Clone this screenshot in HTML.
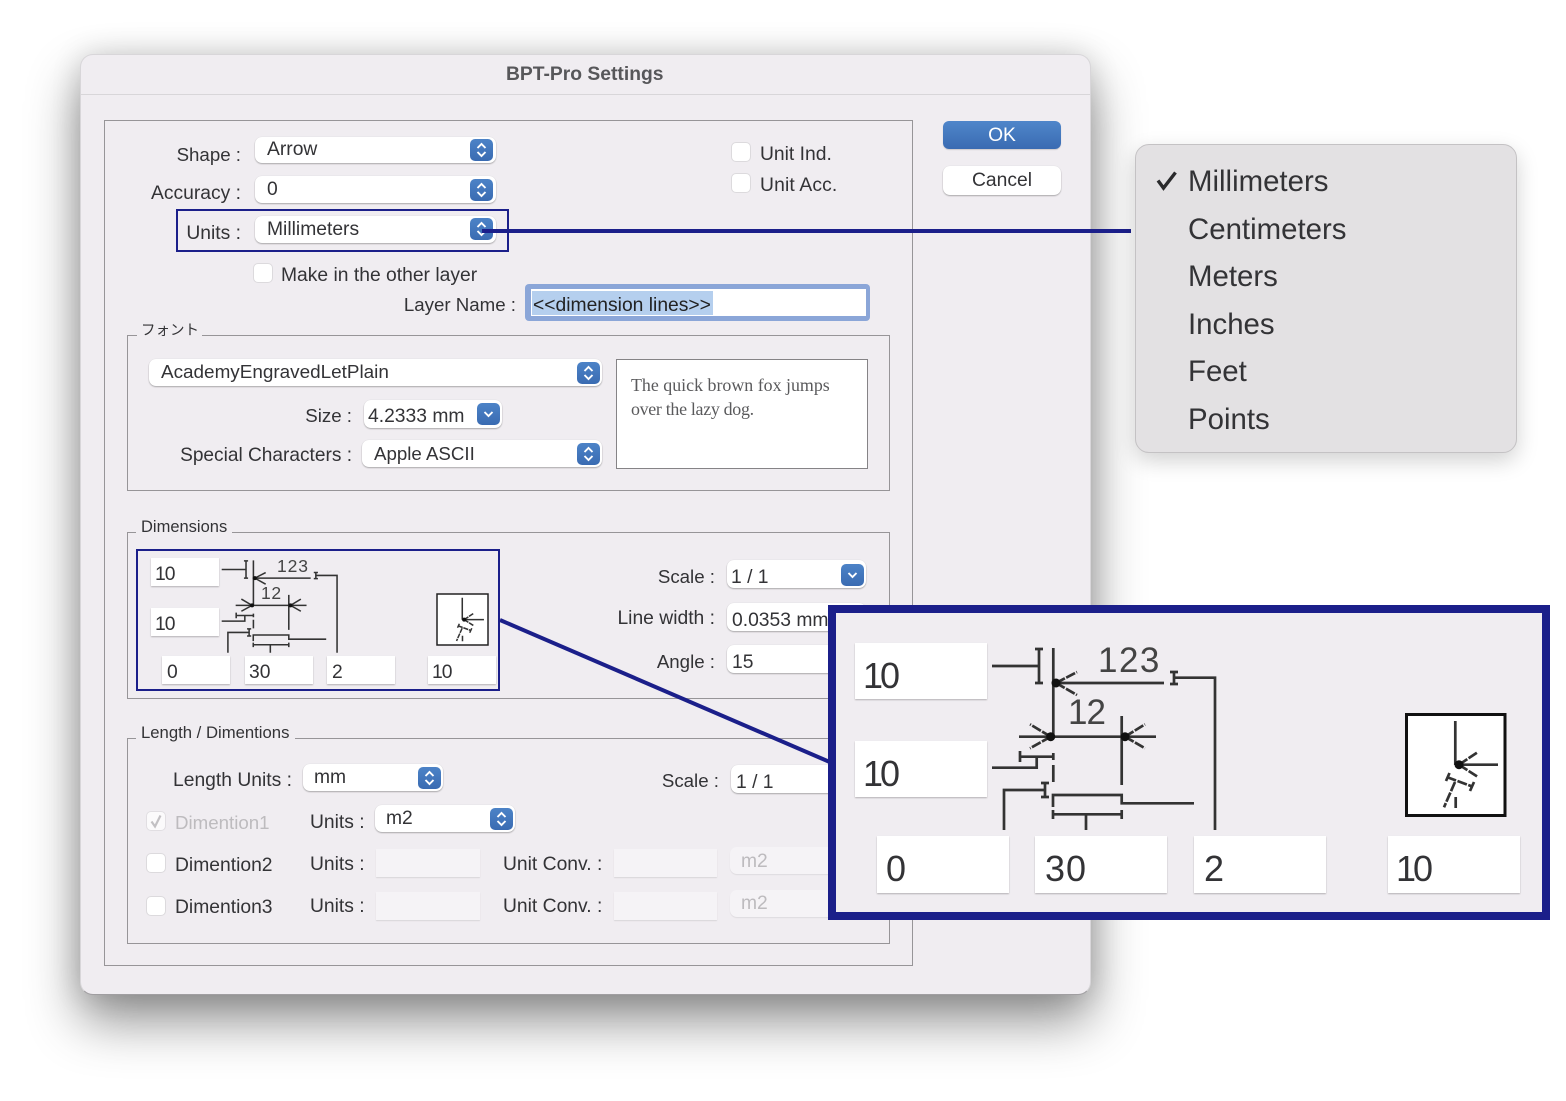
<!DOCTYPE html>
<html lang="en"><head><meta charset="utf-8"><title>BPT-Pro Settings</title>
<style>
html,body{margin:0;padding:0;background:#fff}
body{position:relative;width:1566px;height:1101px;overflow:hidden;font-family:"Liberation Sans","Noto Sans CJK JP",sans-serif;color:#333336}
div,span,i{position:absolute;box-sizing:border-box;display:block}
.t{font-size:19.3px;line-height:19px;white-space:nowrap;font-style:normal;margin-top:1px}
.r{text-align:right}
.n{font-size:18.7px}
.g{border:1.5px solid #979598}
.lb{background:#f0edf1;height:18px}
.s{background:#fff;border-radius:7px;box-shadow:0 1px 1.5px rgba(0,0,0,.28),0 0 1px rgba(0,0,0,.12)}
.b{width:23px;height:22px;border-radius:5px;background:linear-gradient(#4c83c7,#3a6bb2)}
.b svg{position:absolute;left:0;top:0;width:23px;height:22px;fill:none;stroke:#fff;stroke-width:1.9}
.i{background:#fff;box-shadow:0 1px 1.5px rgba(0,0,0,.25)}
.c{background:#fff;border:1px solid #dcdadd;border-radius:5px;width:20px;height:20px}
.d{background:#f5f3f6;box-shadow:0 1px 1px rgba(0,0,0,.1)}
.ds{background:#f5f3f6;border-radius:7px;box-shadow:0 1px 1px rgba(0,0,0,.08)}
.f{color:#bdbbbe}
.m{font-size:29.4px;line-height:30px;left:1188px;color:#333336;white-space:nowrap}
.big{font-size:36px;line-height:38px;margin-top:1px}
</style></head><body>

<div style="left:80px;top:54px;width:1011px;height:941px;background:#f0edf1;border-radius:13px;box-shadow:0 26px 52px rgba(0,0,0,.44),0 0 30px rgba(0,0,0,.14);border:1px solid #d8d6d9;border-bottom-color:#a09ea1"></div>
<div style="left:81px;top:94px;width:1009px;height:1px;background:#d8d6d9"></div>
<span class="t" style="left:506px;top:64px;font-weight:bold;color:#57575a">BPT-Pro Settings</span>

<div class="g" style="left:104px;top:120px;width:809px;height:846px"></div>

<span class="t r n" style="right:1325px;top:144px">Shape :</span>
<div class="s" style="left:255px;top:137px;width:241px;height:26px"></div>
<span class="t" style="left:267px;top:139px">Arrow</span>
<i class="b" style="left:470px;top:139px"><svg viewBox="0 0 23 22"><path d="M7.5 9l4-4 4 4M7.5 13l4 4 4-4"/></svg></i>

<span class="t r" style="right:1325px;top:183px">Accuracy :</span>
<div class="s" style="left:255px;top:176px;width:241px;height:27px"></div>
<span class="t" style="left:267px;top:179px">0</span>
<i class="b" style="left:470px;top:179px"><svg viewBox="0 0 23 22"><path d="M7.5 9l4-4 4 4M7.5 13l4 4 4-4"/></svg></i>

<span class="t r" style="right:1325px;top:223px">Units :</span>
<div class="s" style="left:255px;top:216px;width:241px;height:27px"></div>
<span class="t" style="left:267px;top:219px">Millimeters</span>
<i class="b" style="left:470px;top:218px"><svg viewBox="0 0 23 22"><path d="M7.5 9l4-4 4 4M7.5 13l4 4 4-4"/></svg></i>

<i class="c" style="left:253px;top:263px"></i>
<span class="t" style="left:281px;top:265px">Make in the other layer</span>
<span class="t r n" style="right:1050px;top:294px">Layer Name :</span>
<div style="left:525px;top:284px;width:345px;height:37px;background:#8ba6d8;border-radius:4px"></div>
<div style="left:531px;top:289px;width:335px;height:27px;background:#fff"></div>
<div style="left:532px;top:291px;width:181px;height:24px;background:#b5cfee"></div>
<span class="t" style="left:533px;top:295px;color:#222">&lt;&lt;dimension lines&gt;&gt;</span>

<i class="c" style="left:731px;top:142px"></i>
<span class="t" style="left:760px;top:144px">Unit Ind.</span>
<i class="c" style="left:731px;top:173px"></i>
<span class="t" style="left:760px;top:175px;letter-spacing:.15px">Unit Acc.</span>

<div style="left:943px;top:121px;width:118px;height:28px;border-radius:6px;background:linear-gradient(#4f86ca,#3a6bb2);box-shadow:0 1px 1px rgba(0,0,0,.15)"></div>
<span class="t" style="left:943px;width:118px;text-align:center;top:125px;color:#fff">OK</span>
<div class="s" style="left:943px;top:166px;width:118px;height:29px"></div>
<span class="t" style="left:943px;width:118px;text-align:center;top:170px">Cancel</span>

<!-- Font group -->
<div class="g" style="left:127px;top:335px;width:763px;height:156px"></div>
<div class="lb" style="left:137px;top:325px;width:65px"></div>
<span class="t" style="left:141px;top:322px;font-size:14.5px;line-height:16px">フォント</span>
<div class="s" style="left:149px;top:359px;width:453px;height:27px"></div>
<span class="t" style="left:161px;top:362px;font-size:18.9px">AcademyEngravedLetPlain</span>
<i class="b" style="left:577px;top:362px"><svg viewBox="0 0 23 22"><path d="M7.5 9l4-4 4 4M7.5 13l4 4 4-4"/></svg></i>
<span class="t r n" style="right:1214px;top:405px">Size :</span>
<div class="s" style="left:364px;top:400px;width:138px;height:28px"></div>
<span class="t" style="left:368px;top:406px">4.2333 mm</span>
<i class="b" style="left:477px;top:403px"><svg viewBox="0 0 23 22"><path d="M7.5 9l4 4 4-4"/></svg></i>
<span class="t r" style="right:1214px;top:445px;font-size:19.1px">Special Characters :</span>
<div class="s" style="left:362px;top:440px;width:240px;height:27px"></div>
<span class="t n" style="left:374px;top:443px">Apple ASCII</span>
<i class="b" style="left:577px;top:443px"><svg viewBox="0 0 23 22"><path d="M7.5 9l4-4 4 4M7.5 13l4 4 4-4"/></svg></i>
<div style="left:616px;top:359px;width:252px;height:110px;background:#fff;border:1.5px solid #858386"></div>
<span class="t" style="left:631px;top:375px;font-family:'Liberation Serif',serif;font-size:17.9px;line-height:19px;color:#5a5a5c">The quick brown fox jumps</span>
<span class="t" style="left:631px;top:399px;font-family:'Liberation Serif',serif;font-size:17.9px;line-height:19px;letter-spacing:-.3px;color:#5a5a5c">over the lazy dog.</span>

<!-- Dimensions group -->
<div class="g" style="left:127px;top:532px;width:763px;height:167px"></div>
<div class="lb" style="left:136px;top:522px;width:96px"></div>
<span class="t" style="left:141px;top:517px;font-size:16.5px;line-height:18px">Dimensions</span>

<div class="i" style="left:151px;top:558px;width:68px;height:28px"></div>
<span class="t" style="left:155px;top:564px;letter-spacing:-1px">10</span>
<div class="i" style="left:151px;top:608px;width:68px;height:28px"></div>
<span class="t" style="left:155px;top:614px;letter-spacing:-1px">10</span>
<div class="i" style="left:162px;top:656px;width:68px;height:28px"></div>
<span class="t" style="left:167px;top:662px">0</span>
<div class="i" style="left:245px;top:656px;width:68px;height:28px"></div>
<span class="t" style="left:249px;top:662px">30</span>
<div class="i" style="left:327px;top:656px;width:68px;height:28px"></div>
<span class="t" style="left:332px;top:662px">2</span>
<div class="i" style="left:428px;top:656px;width:68px;height:28px"></div>
<span class="t" style="left:432px;top:662px;letter-spacing:-1px">10</span>

<svg style="position:absolute;left:0;top:0" width="1566" height="1101" viewBox="0 0 1566 1101">
<g transform="translate(221.7 570) scale(.5173 .5076) translate(-992 -667)" fill="none" stroke="#333" stroke-width="3">
<path d="M992 666H1039M1039 649V683M1035 649H1043M1035 683H1043M1053.300 648V737M1053.300 753V760M1053.300 765V782"/>
<path d="M1056 683H1164M1174 672V684M1170 672H1178M1170 684H1178M1174 677.700H1215V830"/>
<path d="M1056 683L1077 672M1056 683L1077 695M1050.700 736.700L1030 724.300M1050.700 736.700L1030 748.300M1125 736.700L1145 724.300M1125 736.700L1145 748.300"/>
<path d="M1019 736.700H1156M1121.700 716V785"/>
<path d="M1020 756.700H1054M1020 751V762M1036.700 756.700V767.700H992"/>
<path d="M1004 830V790H1045M1045 783V797M1041 783H1049M1041 797H1049M1053 807V795H1121.700V803.300H1194"/>
<path d="M1053 814.300H1121.700M1053 810V819M1121.700 810V819M1086 814.300V830"/>
<circle cx="1056" cy="683" r="4" fill="#111" stroke="none"/><circle cx="1050.700" cy="736.700" r="4" fill="#111" stroke="none"/><circle cx="1125" cy="736.700" r="4" fill="#111" stroke="none"/>
</g>
<text x="277" y="572" font-size="17.500" letter-spacing=".9" fill="#444" font-family="Liberation Sans">123</text>
<text x="261" y="599" font-size="17.500" letter-spacing=".6" fill="#444" font-family="Liberation Sans">12</text>
<rect x="437" y="594" width="51" height="51" fill="#fff" stroke="#222" stroke-width="1.500"/>
<g transform="translate(437 594) scale(.5075 .5) translate(-1405.500 -713.500)" fill="none" stroke="#333" stroke-width="3">
<path d="M1455.300 721V765M1459 764.700H1498M1455.700 797V808"/>
<path d="M1459 764.700L1478 752M1459 764.700L1478 777M1446.700 777L1471.700 786.300M1455 782L1444 807.300" stroke-dasharray="10 1.500"/>
<path d="M1449.500 773L1446 781M1474 782L1470 791"/>
<circle cx="1459" cy="764.700" r="4" fill="#111" stroke="none"/>
</g>
</svg>

<div style="left:136px;top:549px;width:364px;height:142px;border:2px solid #1b1f8a"></div>

<span class="t r n" style="right:851px;top:566px">Scale :</span>
<div class="s" style="left:727px;top:560px;width:139px;height:28px"></div>
<span class="t" style="left:731px;top:567px">1 / 1</span>
<i class="b" style="left:841px;top:564px"><svg viewBox="0 0 23 22"><path d="M7.5 9l4 4 4-4"/></svg></i>
<span class="t r" style="right:851px;top:608px">Line width :</span>
<div class="s" style="left:727px;top:603px;width:139px;height:28px"></div>
<span class="t" style="left:732px;top:610px">0.0353 mm</span>
<span class="t r n" style="right:851px;top:651px">Angle :</span>
<div class="s" style="left:727px;top:645px;width:139px;height:28px"></div>
<span class="t" style="left:732px;top:652px">15</span>

<!-- Length group -->
<div class="g" style="left:127px;top:738px;width:763px;height:206px"></div>
<div class="lb" style="left:136px;top:728px;width:159px"></div>
<span class="t" style="left:141px;top:723px;font-size:16.700px;line-height:18px">Length / Dimentions</span>
<span class="t r" style="right:1274px;top:770px">Length Units :</span>
<div class="s" style="left:303px;top:764px;width:140px;height:27px"></div>
<span class="t" style="left:314px;top:767px">mm</span>
<i class="b" style="left:418px;top:767px"><svg viewBox="0 0 23 22"><path d="M7.5 9l4-4 4 4M7.5 13l4 4 4-4"/></svg></i>
<span class="t r n" style="right:847px;top:770px">Scale :</span>
<div class="s" style="left:731px;top:765px;width:120px;height:28px"></div>
<span class="t" style="left:736px;top:772px">1 / 1</span>

<i class="c" style="left:146px;top:811px;opacity:.75"></i>
<svg style="position:absolute;left:146px;top:811px" width="20" height="20" viewBox="0 0 20 20"><path d="M5.500 10.500L9 15.500L14.500 4.500" fill="none" stroke="#c2c0c3" stroke-width="2.200"/></svg>
<span class="t f" style="left:175px;top:812px;font-size:18.700px">Dimention1</span>
<span class="t" style="left:310px;top:812px">Units :</span>
<div class="s" style="left:375px;top:805px;width:140px;height:27px"></div>
<span class="t" style="left:386px;top:808px">m2</span>
<i class="b" style="left:490px;top:808px"><svg viewBox="0 0 23 22"><path d="M7.5 9l4-4 4 4M7.5 13l4 4 4-4"/></svg></i>

<i class="c" style="left:146px;top:853px"></i>
<span class="t" style="left:175px;top:855px">Dimention2</span>
<span class="t" style="left:310px;top:854px">Units :</span>
<div class="d" style="left:376px;top:849px;width:104px;height:28px"></div>
<span class="t" style="left:503px;top:854px">Unit Conv. :</span>
<div class="d" style="left:614px;top:849px;width:103px;height:28px"></div>
<div class="ds" style="left:730px;top:847px;width:120px;height:27px"></div>
<span class="t f" style="left:741px;top:851px">m2</span>

<i class="c" style="left:146px;top:896px"></i>
<span class="t" style="left:175px;top:897px">Dimention3</span>
<span class="t" style="left:310px;top:896px">Units :</span>
<div class="d" style="left:376px;top:892px;width:104px;height:28px"></div>
<span class="t" style="left:503px;top:896px">Unit Conv. :</span>
<div class="d" style="left:614px;top:892px;width:103px;height:28px"></div>
<div class="ds" style="left:730px;top:890px;width:120px;height:27px"></div>
<span class="t f" style="left:741px;top:893px">m2</span>

<!-- callouts -->
<div style="left:176px;top:209px;width:333px;height:43px;border:2px solid #1b1f8a"></div>
<svg style="position:absolute;left:0;top:0" width="1566" height="1101" viewBox="0 0 1566 1101">
<path d="M482 231H1131" stroke="#1b1f8a" stroke-width="4" fill="none"/>
<path d="M500 620L832 763" stroke="#1b1f8a" stroke-width="4" fill="none"/>
</svg>

<!-- menu -->
<div style="left:1135px;top:144px;width:382px;height:309px;background:#e3e1e3;border:1px solid #c4c2c4;border-radius:14px;box-shadow:0 8px 22px rgba(0,0,0,.18)"></div>
<svg style="position:absolute;left:1150px;top:165px" width="34" height="32" viewBox="0 0 34 32"><path d="M8 15.500L13.500 23L25.500 7.500" fill="none" stroke="#2a2a2c" stroke-width="3.400"/></svg>
<span class="m" style="top:167px">Millimeters</span>
<span class="m" style="top:215px">Centimeters</span>
<span class="m" style="top:262px">Meters</span>
<span class="m" style="top:310px">Inches</span>
<span class="m" style="top:357px">Feet</span>
<span class="m" style="top:405px">Points</span>

<!-- magnifier -->
<div style="left:828px;top:605px;width:722px;height:315px;background:#f0edf1;border:8px solid #1b1f8a"></div>
<div class="i" style="left:855px;top:643px;width:132px;height:56px"></div>
<span class="t big" style="left:863px;top:656px;letter-spacing:-3px">10</span>
<div class="i" style="left:855px;top:741px;width:132px;height:56px"></div>
<span class="t big" style="left:863px;top:754px;letter-spacing:-3px">10</span>
<div class="i" style="left:877px;top:836px;width:132px;height:57px"></div>
<span class="t big" style="left:886px;top:849px">0</span>
<div class="i" style="left:1035px;top:836px;width:132px;height:57px"></div>
<span class="t big" style="left:1045px;top:849px;letter-spacing:1px">30</span>
<div class="i" style="left:1194px;top:836px;width:132px;height:57px"></div>
<span class="t big" style="left:1204px;top:849px">2</span>
<div class="i" style="left:1388px;top:836px;width:132px;height:57px"></div>
<span class="t big" style="left:1396px;top:849px;letter-spacing:-3px">10</span>
<svg style="position:absolute;left:0;top:0" width="1566" height="1101" viewBox="0 0 1566 1101">
<g fill="none" stroke="#333" stroke-width="2.700">
<path d="M992 666H1039M1039 649V683M1035 649H1043M1035 683H1043M1053.300 648V737M1053.300 753V760M1053.300 765V782"/>
<path d="M1056 683H1164M1174 672V684M1170 672H1178M1170 684H1178M1174 677.700H1215V830"/>
<path d="M1056 683L1077 672M1056 683L1077 695M1050.700 736.700L1030 724.300M1050.700 736.700L1030 748.300M1125 736.700L1145 724.300M1125 736.700L1145 748.300" stroke-dasharray="10 1.500"/>
<path d="M1019 736.700H1156M1121.700 716V785"/>
<path d="M1020 756.700H1054M1020 751V762M1036.700 756.700V767.700H992"/>
<path d="M1004 830V790H1045M1045 783V797M1041 783H1049M1041 797H1049M1053 807V795H1121.700V803.300H1194"/>
<path d="M1053 814.300H1121.700M1053 810V819M1121.700 810V819M1086 814.300V830"/>
<circle cx="1056" cy="683" r="4.500" fill="#111" stroke="none"/><circle cx="1050.700" cy="736.700" r="4.500" fill="#111" stroke="none"/><circle cx="1125" cy="736.700" r="4.500" fill="#111" stroke="none"/>
</g>
<text x="1098" y="672" font-size="35" letter-spacing="1.500" fill="#444" font-family="Liberation Sans">123</text>
<text x="1068" y="724" font-size="35" letter-spacing="-1" fill="#444" font-family="Liberation Sans">12</text>
<rect x="1406.500" y="714.500" width="98.500" height="101" fill="#fff" stroke="#111" stroke-width="3"/>
<g fill="none" stroke="#333" stroke-width="2.700">
<path d="M1455.300 721V765M1459 764.700H1498M1455.700 797V808"/>
<path d="M1459 764.700L1478 752M1459 764.700L1478 777M1446.700 777L1471.700 786.300M1455 782L1444 807.300" stroke-dasharray="10 1.500"/>
<path d="M1449.500 773L1446 781M1474 782L1470 791"/>
<circle cx="1459" cy="764.700" r="4.500" fill="#111" stroke="none"/>
</g>
</svg>
</body></html>
